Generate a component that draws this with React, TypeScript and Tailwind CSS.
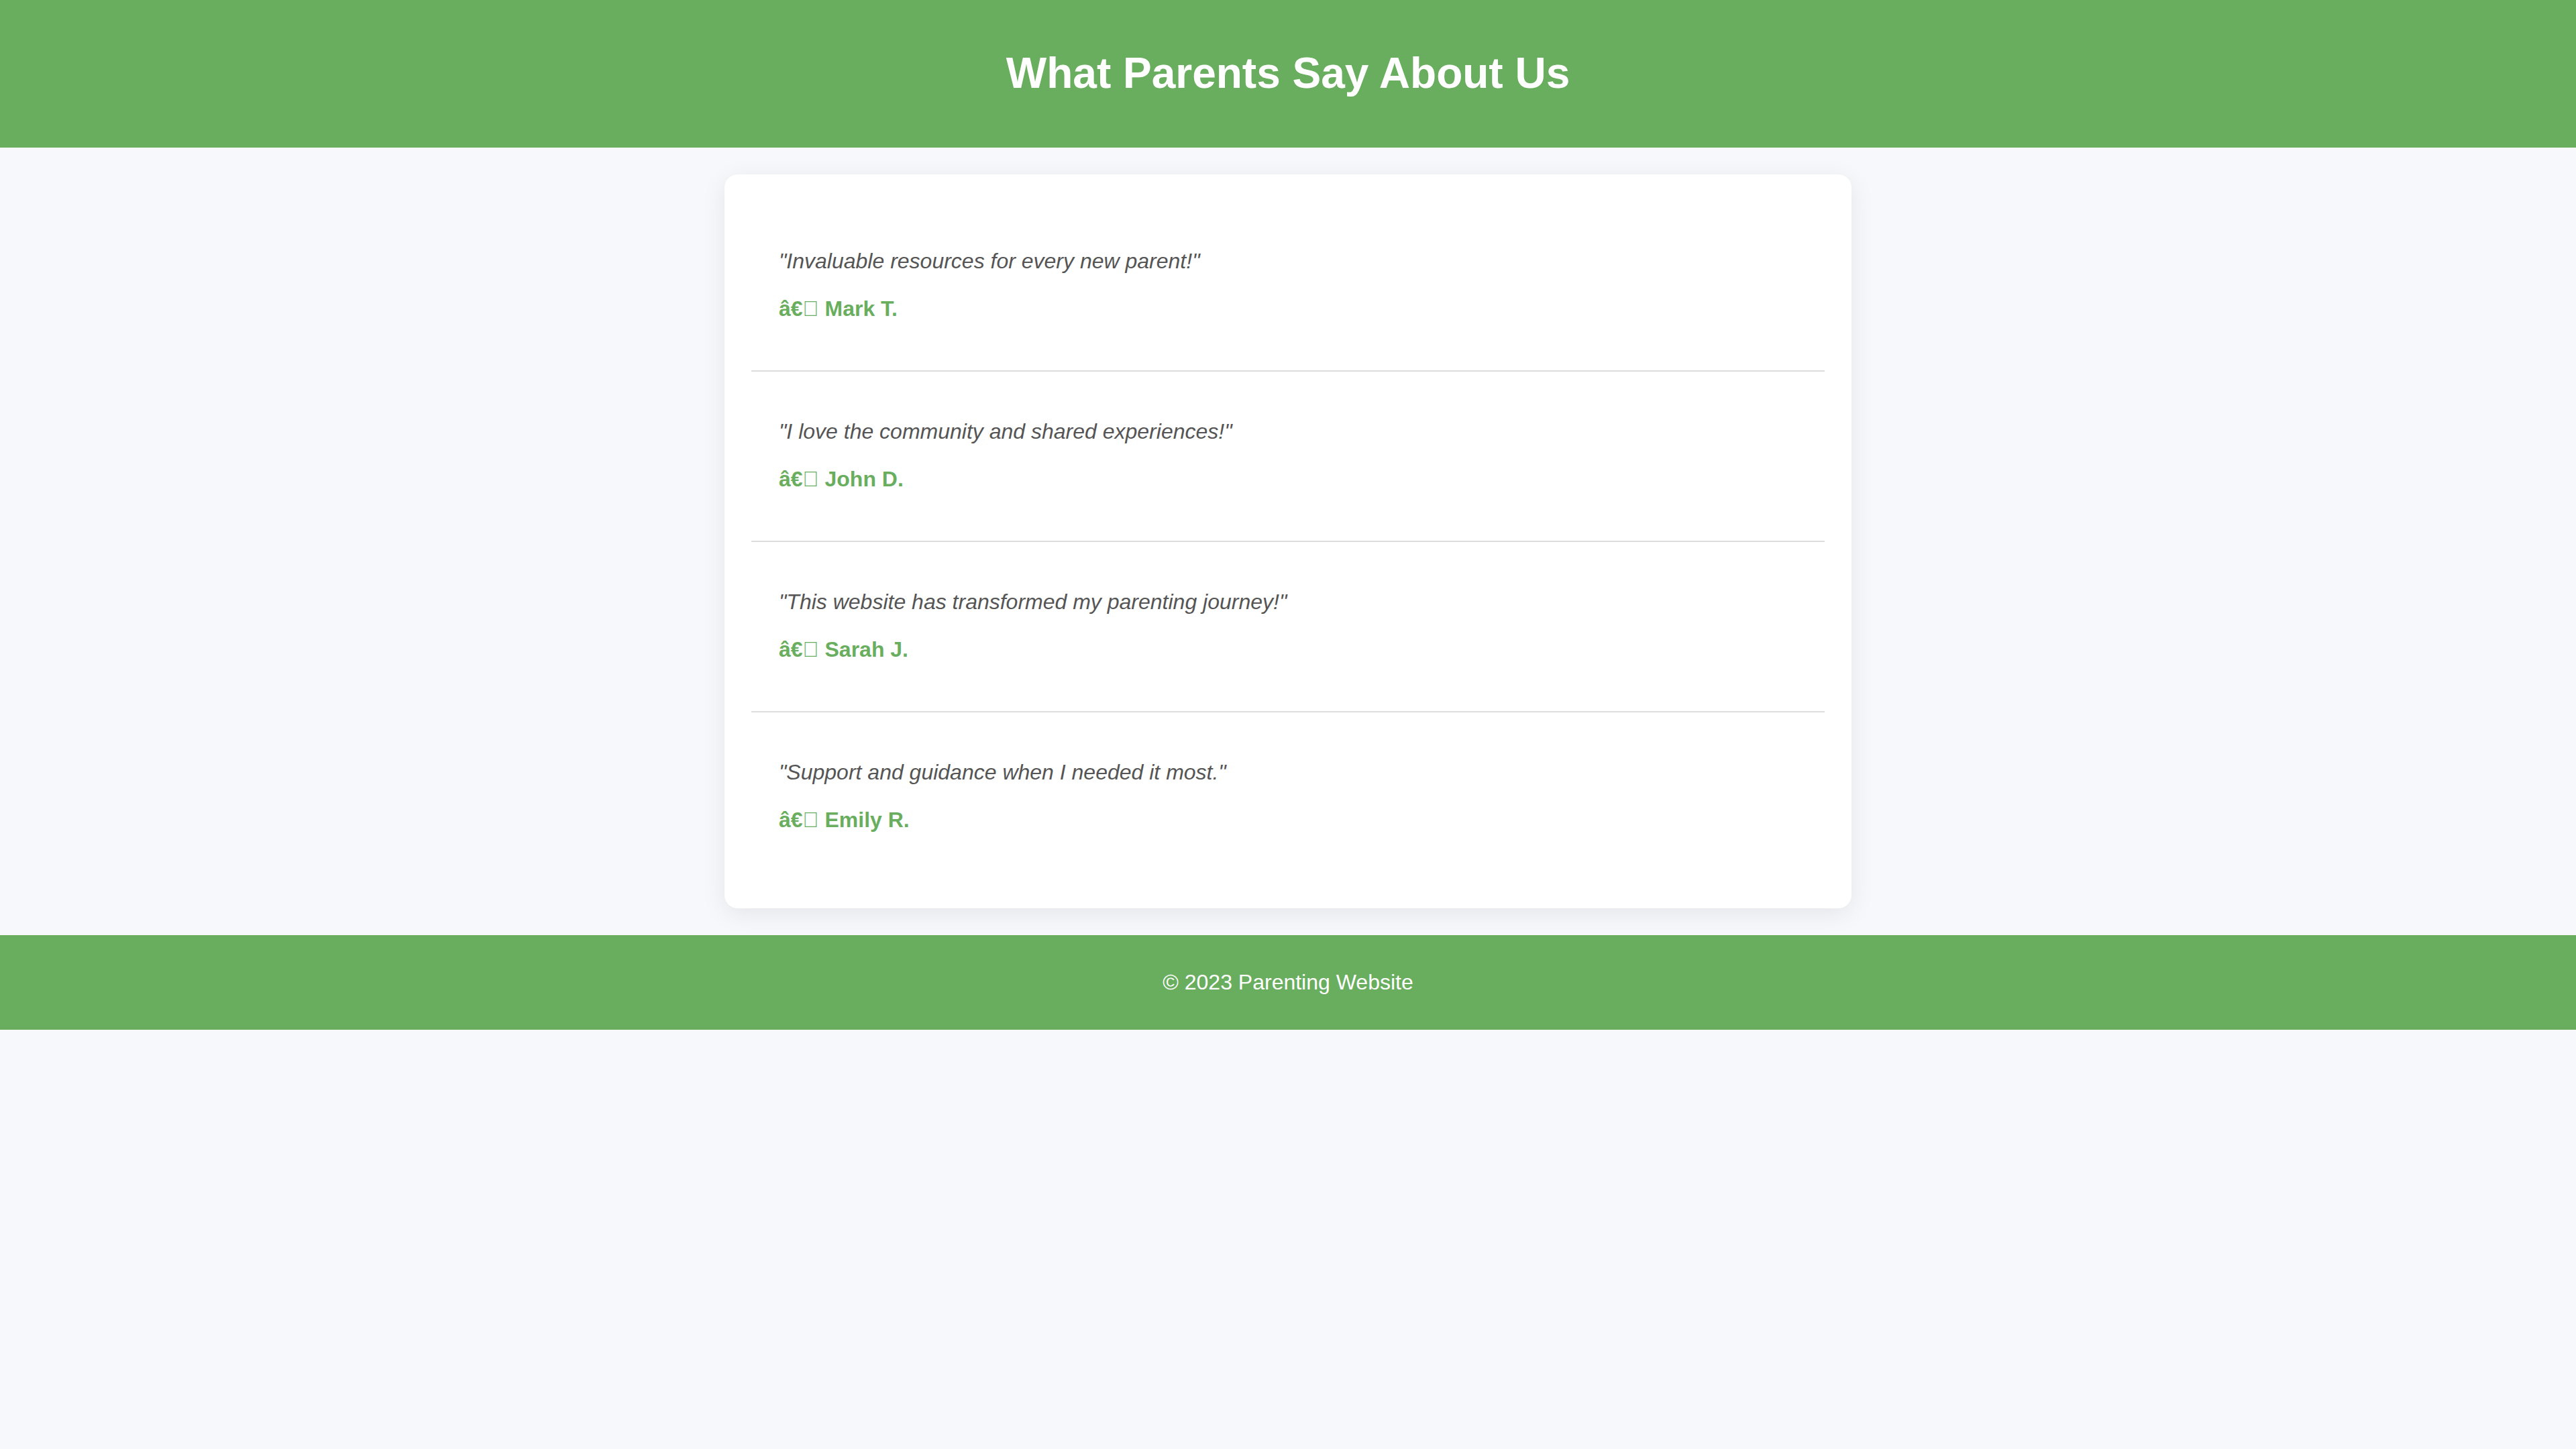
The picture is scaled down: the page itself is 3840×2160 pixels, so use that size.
const testimonials = [
  { quote: 'Invaluable resources for every new parent!', name: 'Mark T.' },
  { quote: 'I love the community and shared experiences!', name: 'John D.' },
  { quote: 'This website has transformed my parenting journey!', name: 'Sarah J.' },
  { quote: 'Support and guidance when I needed it most.', name: 'Emily R.' },
];

// the dash arrived double-encoded; the last byte has no glyph, so it shows as a box
const dash = '\u00e2\u20ac\ue000';

export default function App() {
  return (
    <div className="min-h-screen bg-[#f7f8fc] font-['Liberation_Sans',Arial,sans-serif]">
      <header className="flex h-[220px] items-center justify-center bg-[#69ae5e] text-white">
        <h1 className="text-[64px] font-bold leading-[1.15]">What Parents Say About Us</h1>
      </header>

      <main className="py-[40px]">
        <div className="mx-auto w-[1680px] rounded-[20px] bg-white px-[40px] py-[40px] shadow-[0_8px_36px_rgba(0,0,0,0.08)]">
          {testimonials.map((t, i) => (
            <div
              key={t.name}
              className={`px-[41px] pt-[71px] pb-[73px] ${i < testimonials.length - 1 ? 'border-b-2 border-[#dddddd]' : ''}`}
            >
              <p className="text-[32px] italic leading-[37px] text-[#555555]">"{t.quote}"</p>
              <p className="mt-[34px] text-[32px] font-bold leading-[37px] text-[#69ae5e]">
                {dash} {t.name}
              </p>
            </div>
          ))}
        </div>
      </main>

      <footer className="flex h-[141px] items-center justify-center bg-[#69ae5e] text-[32px] leading-[1.15] text-white">
        <p>© 2023 Parenting Website</p>
      </footer>
    </div>
  );
}
